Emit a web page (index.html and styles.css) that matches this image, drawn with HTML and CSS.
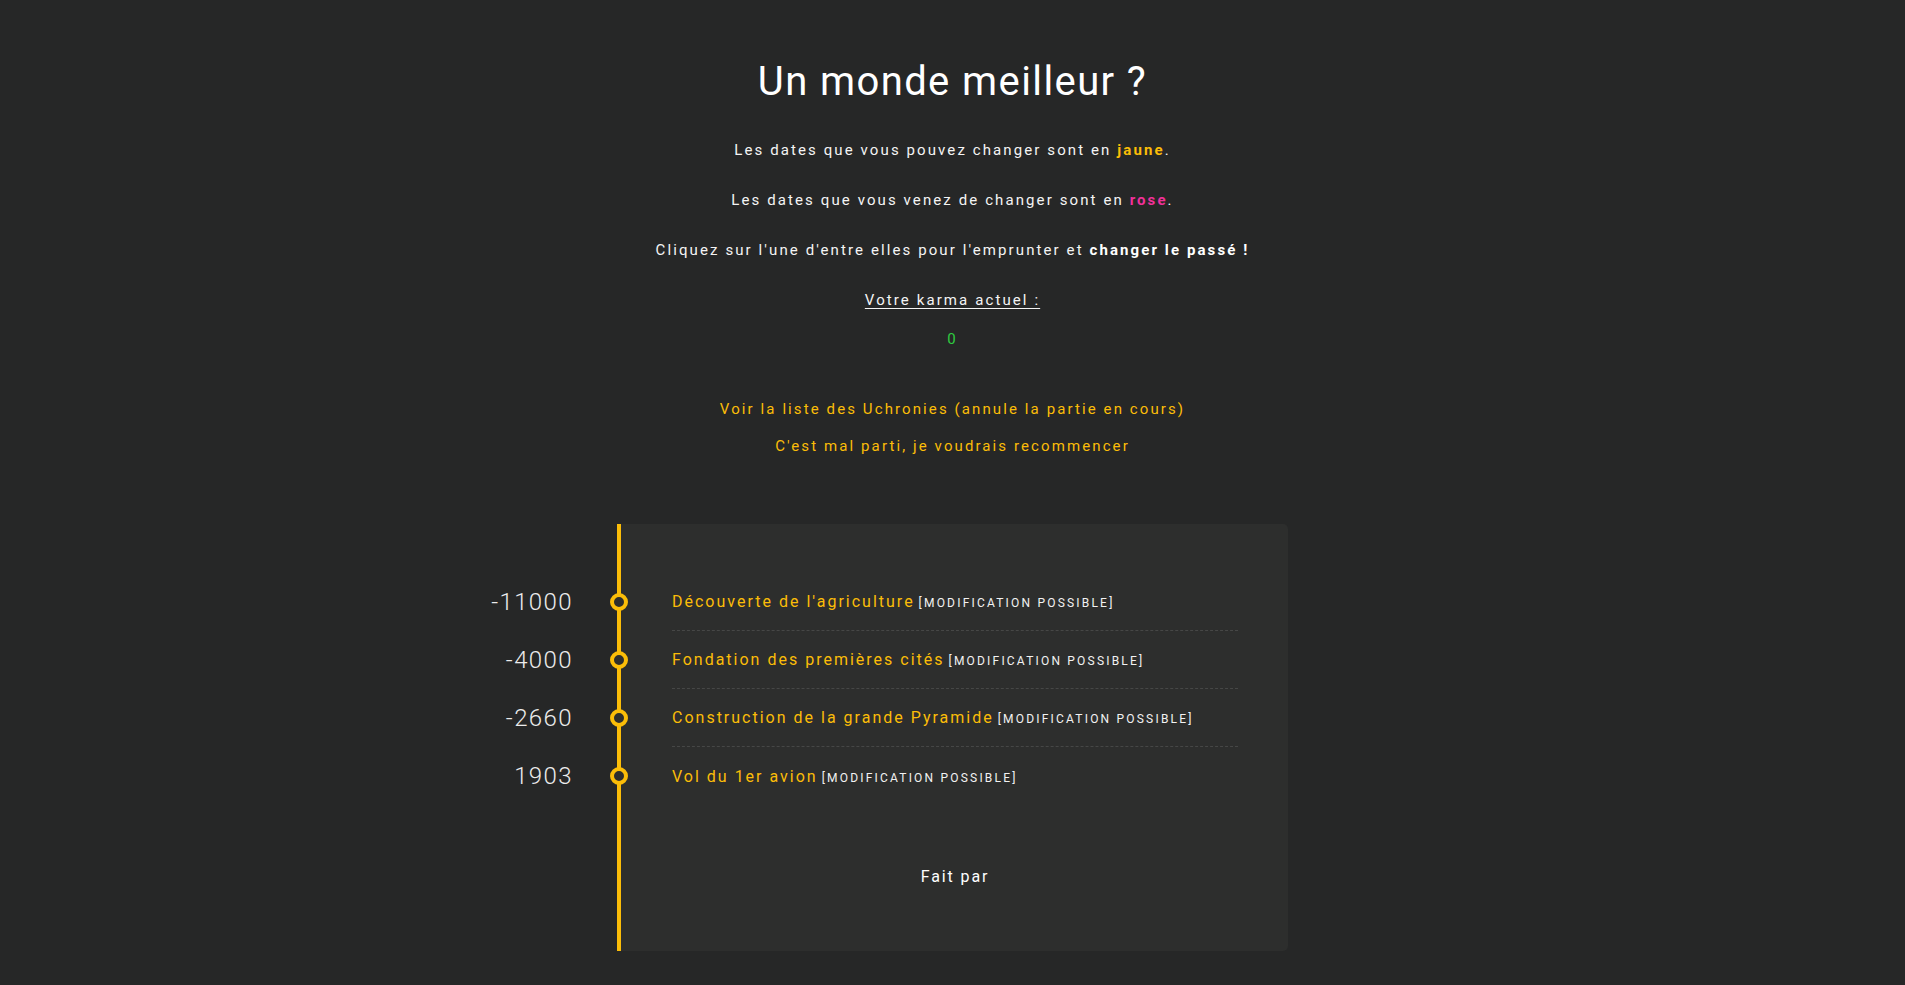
FILE: index.html
```html
<!DOCTYPE html>
<html lang="fr">
<head>
<meta charset="utf-8">
<title>Un monde meilleur ?</title>
<link rel="stylesheet" href="styles.css">
</head>
<body>
<main class="page">
  <header class="intro">
    <h1 class="title">Un monde meilleur ?</h1>
    <p class="line">Les dates que vous pouvez changer sont en <strong class="yellow">jaune</strong>.</p>
    <p class="line">Les dates que vous venez de changer sont en <strong class="pink">rose</strong>.</p>
    <p class="line">Cliquez sur l'une d'entre elles pour l'emprunter et <strong>changer le passé !</strong></p>
    <p class="line karma-label">Votre karma actuel :</p>
    <p class="line karma">0</p>
    <nav class="links">
      <a class="link" href="#">Voir la liste des Uchronies (annule la partie en cours)</a>
      <a class="link" href="#">C'est mal parti, je voudrais recommencer</a>
    </nav>
  </header>

  <section class="timeline">
    <ul class="events">
      <li class="event">
        <span class="date">-11000</span>
        <span class="dot"></span>
        <span class="label"><a class="event-link" href="#">Découverte de l'agriculture</a> <span class="tag">[Modification possible]</span></span>
      </li>
      <li class="event">
        <span class="date">-4000</span>
        <span class="dot"></span>
        <span class="label"><a class="event-link" href="#">Fondation des premières cités</a> <span class="tag">[Modification possible]</span></span>
      </li>
      <li class="event">
        <span class="date">-2660</span>
        <span class="dot"></span>
        <span class="label"><a class="event-link" href="#">Construction de la grande Pyramide</a> <span class="tag">[Modification possible]</span></span>
      </li>
      <li class="event">
        <span class="date">1903</span>
        <span class="dot"></span>
        <span class="label"><a class="event-link" href="#">Vol du 1er avion</a> <span class="tag">[Modification possible]</span></span>
      </li>
    </ul>
    <footer class="credits">Fait par</footer>
  </section>
</main>
</body>
</html>
```

FILE: styles.css
```css
html, body {
  margin: 0;
  padding: 0;
}

body {
  background: #262727;
  color: #f2f2f2;
  font-family: Roboto, "Liberation Sans", sans-serif;
  min-height: 985px;
}

.page {
  padding-top: 58px;
  padding-bottom: 36px;
}

.intro {
  text-align: center;
}

.title {
  margin: 0;
  font-size: 40px;
  line-height: 48px;
  font-weight: 400;
  letter-spacing: 1.4px;
  color: #ffffff;
}

.line {
  margin: 0;
  font-size: 15px;
  line-height: 20px;
  letter-spacing: 2.1px;
  color: #f4f4f4;
}

.title + .line {
  margin-top: 34px;
}

.line + .line {
  margin-top: 30px;
}

.line strong {
  font-weight: 700;
  color: #ffffff;
}

.line .yellow {
  color: #fbbd08;
}

.line .pink {
  color: #f0309a;
}

.karma-label {
  text-decoration: underline;
  text-underline-offset: 3px;
}

.line.karma {
  margin-top: 19px;
  color: #2ecc40;
}

.links {
  margin-top: 50px;
  display: flex;
  flex-direction: column;
  align-items: center;
  gap: 17px;
}

.link {
  font-size: 15px;
  line-height: 20px;
  letter-spacing: 2.1px;
  color: #fbbd08;
  text-decoration: none;
}

.timeline {
  margin: 68px auto 0;
  background: #2d2e2d;
  border-left: 4px solid #fbbd08;
  border-radius: 0 5px 5px 0;
  padding: 49px 50px 62px 51px;
  box-sizing: content-box;
  width: 566px;
}

.events {
  list-style: none;
  margin: 0;
  padding: 0;
}

.event {
  display: flex;
  align-items: center;
  height: 58px;
  border-bottom: 1px dashed #464746;
  box-sizing: border-box;
}

.event:last-child {
  border-bottom: none;
}

.date {
  flex: none;
  width: 150px;
  margin-left: -249px;
  text-align: right;
  font-size: 24px;
  font-weight: 300;
  color: #ececec;
  letter-spacing: 1.4px;
}

.dot {
  flex: none;
  width: 10px;
  height: 10px;
  margin-left: 37px;
  border: 4px solid #fbbd08;
  border-radius: 50%;
  background: #2d2e2d;
}

.label {
  margin-left: 44px;
  white-space: nowrap;
}

.event-link {
  font-size: 16px;
  letter-spacing: 2px;
  color: #fbbd08;
  text-decoration: none;
}

.tag {
  font-size: 12px;
  letter-spacing: 2.2px;
  text-transform: uppercase;
  color: #f2f2f2;
}

.credits {
  margin-top: 60px;
  text-align: center;
  font-size: 16px;
  line-height: 24px;
  letter-spacing: 1.9px;
  color: #ffffff;
}
```
